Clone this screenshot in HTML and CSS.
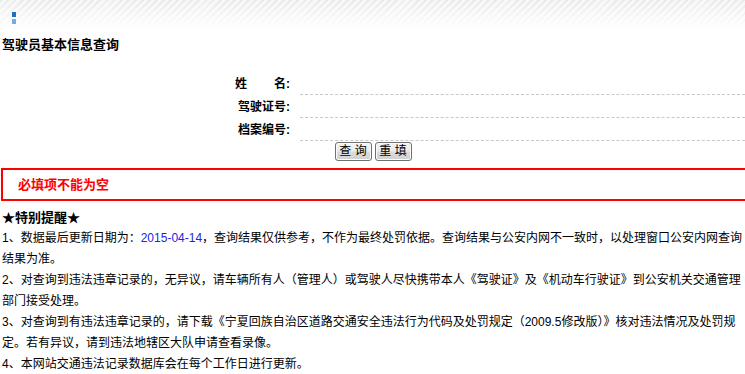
FILE: index.html
```html
<!DOCTYPE html>
<html lang="zh-CN">
<head>
<meta charset="utf-8">
<title>驾驶员基本信息查询</title>
<link rel="stylesheet" href="styles.css">
</head>
<body>
<div class="header">
  <span class="mark"><i class="mark-a"></i><i class="mark-b"></i></span>
</div>
<h1 class="title">驾驶员基本信息查询</h1>
<form class="query">
  <div class="grid">
    <label class="lbl">姓<span class="sp"></span>名:</label>
    <input class="field" type="text">
    <label class="lbl">驾驶证号:</label>
    <input class="field" type="text">
    <label class="lbl">档案编号:</label>
    <input class="field" type="text">
  </div>
  <div class="actions">
    <button type="button" class="btn">查 询</button>
    <button type="reset" class="btn">重 填</button>
  </div>
</form>
<div class="alert">必填项不能为空</div>
<h2 class="notice-title">★特别提醒★</h2>
<div class="notice">
  <p>1、数据最后更新日期为：<span class="date">2015-04-14</span>，查询结果仅供参考，不作为最终处罚依据。查询结果与公安内网不一致时，以处理窗口公安内网查询结果为准。</p>
  <p>2、对查询到违法违章记录的，无异议，请车辆所有人（管理人）或驾驶人尽快携带本人《驾驶证》及《机动车行驶证》到公安机关交通管理部门接受处理。</p>
  <p>3、对查询到有违法违章记录的，请下载《宁夏回族自治区道路交通安全违法行为代码及处罚规定（2009.5修改版）》核对违法情况及处罚规定。若有异议，请到违法地辖区大队申请查看录像。</p>
  <p>4、本网站交通违法记录数据库会在每个工作日进行更新。</p>
</div>
</body>
</html>
```
FILE: styles.css
```css
html, body {
  margin: 0;
  padding: 0;
  overflow-x: hidden;
}
body {
  font-family: "Liberation Sans", "Noto Sans CJK SC", sans-serif;
  font-size: 12px;
  color: #000;
  background: #fff;
}
.header {
  height: 30px;
  box-sizing: border-box;
  padding: 12px 0 0 12px;
  background:
    linear-gradient(to bottom, rgba(255,255,255,0) 0%, rgba(255,255,255,0.6) 55%, #fff 100%),
    repeating-linear-gradient(135deg, #e9e9e9 0 2px, #f7f7f7 2px 5px);
}
.mark {
  display: flex;
  flex-direction: column;
  gap: 2px;
  width: 4px;
}
.mark i {
  display: block;
  width: 4px;
  height: 5px;
}
.mark-a { background: #1f6fc2; }
.mark-b { background: #72aee6; }
.title {
  margin: 5px 0 0 2px;
  font-size: 13px;
  line-height: 20px;
  font-weight: bold;
}
.query {
  margin: 17px 0 0 0;
}
.grid {
  display: grid;
  grid-template-columns: 290px 1fr;
  grid-auto-rows: 23px;
  column-gap: 10px;
}
.lbl {
  font-weight: bold;
  text-align: right;
  align-self: center;
  line-height: 16px;
}
.sp {
  display: inline-block;
  width: 27px;
}
.field {
  border: none;
  border-bottom: 1px dashed #c8c8c8;
  height: 23px;
  box-sizing: border-box;
  padding: 0 2px;
  margin: 0;
  font: inherit;
  outline: none;
  background: transparent;
}
.actions {
  display: flex;
  justify-content: center;
  gap: 3px;
  margin-top: 1px;
  padding-left: 1px;
}
.btn {
  width: 37px;
  height: 19px;
  padding: 0;
  font-family: "Liberation Sans", "Noto Sans CJK SC", sans-serif;
  font-size: 12px;
  line-height: 15px;
  color: #000;
  border: 1px solid #707070;
  border-radius: 3px;
  background: linear-gradient(to bottom, #f4f4f4 0%, #ececec 48%, #dcdcdc 52%, #d0d0d0 100%);
  box-shadow: inset 0 0 0 1px #fbfbfb;
}
.alert {
  margin: 7px 0 0 1px;
  height: 33px;
  box-sizing: border-box;
  border: 2px solid #ff0000;
  border-right: 0;
  padding-left: 15px;
  color: #ff0000;
  font-size: 13px;
  font-weight: bold;
  line-height: 29px;
}
.notice-title {
  margin: 6px 0 0 2px;
  font-size: 13px;
  line-height: 21px;
  font-weight: bold;
}
.notice {
  padding-left: 2px;
}
.notice p {
  margin: 0;
  line-height: 21px;
}
.date {
  color: #2323e0;
}
```
